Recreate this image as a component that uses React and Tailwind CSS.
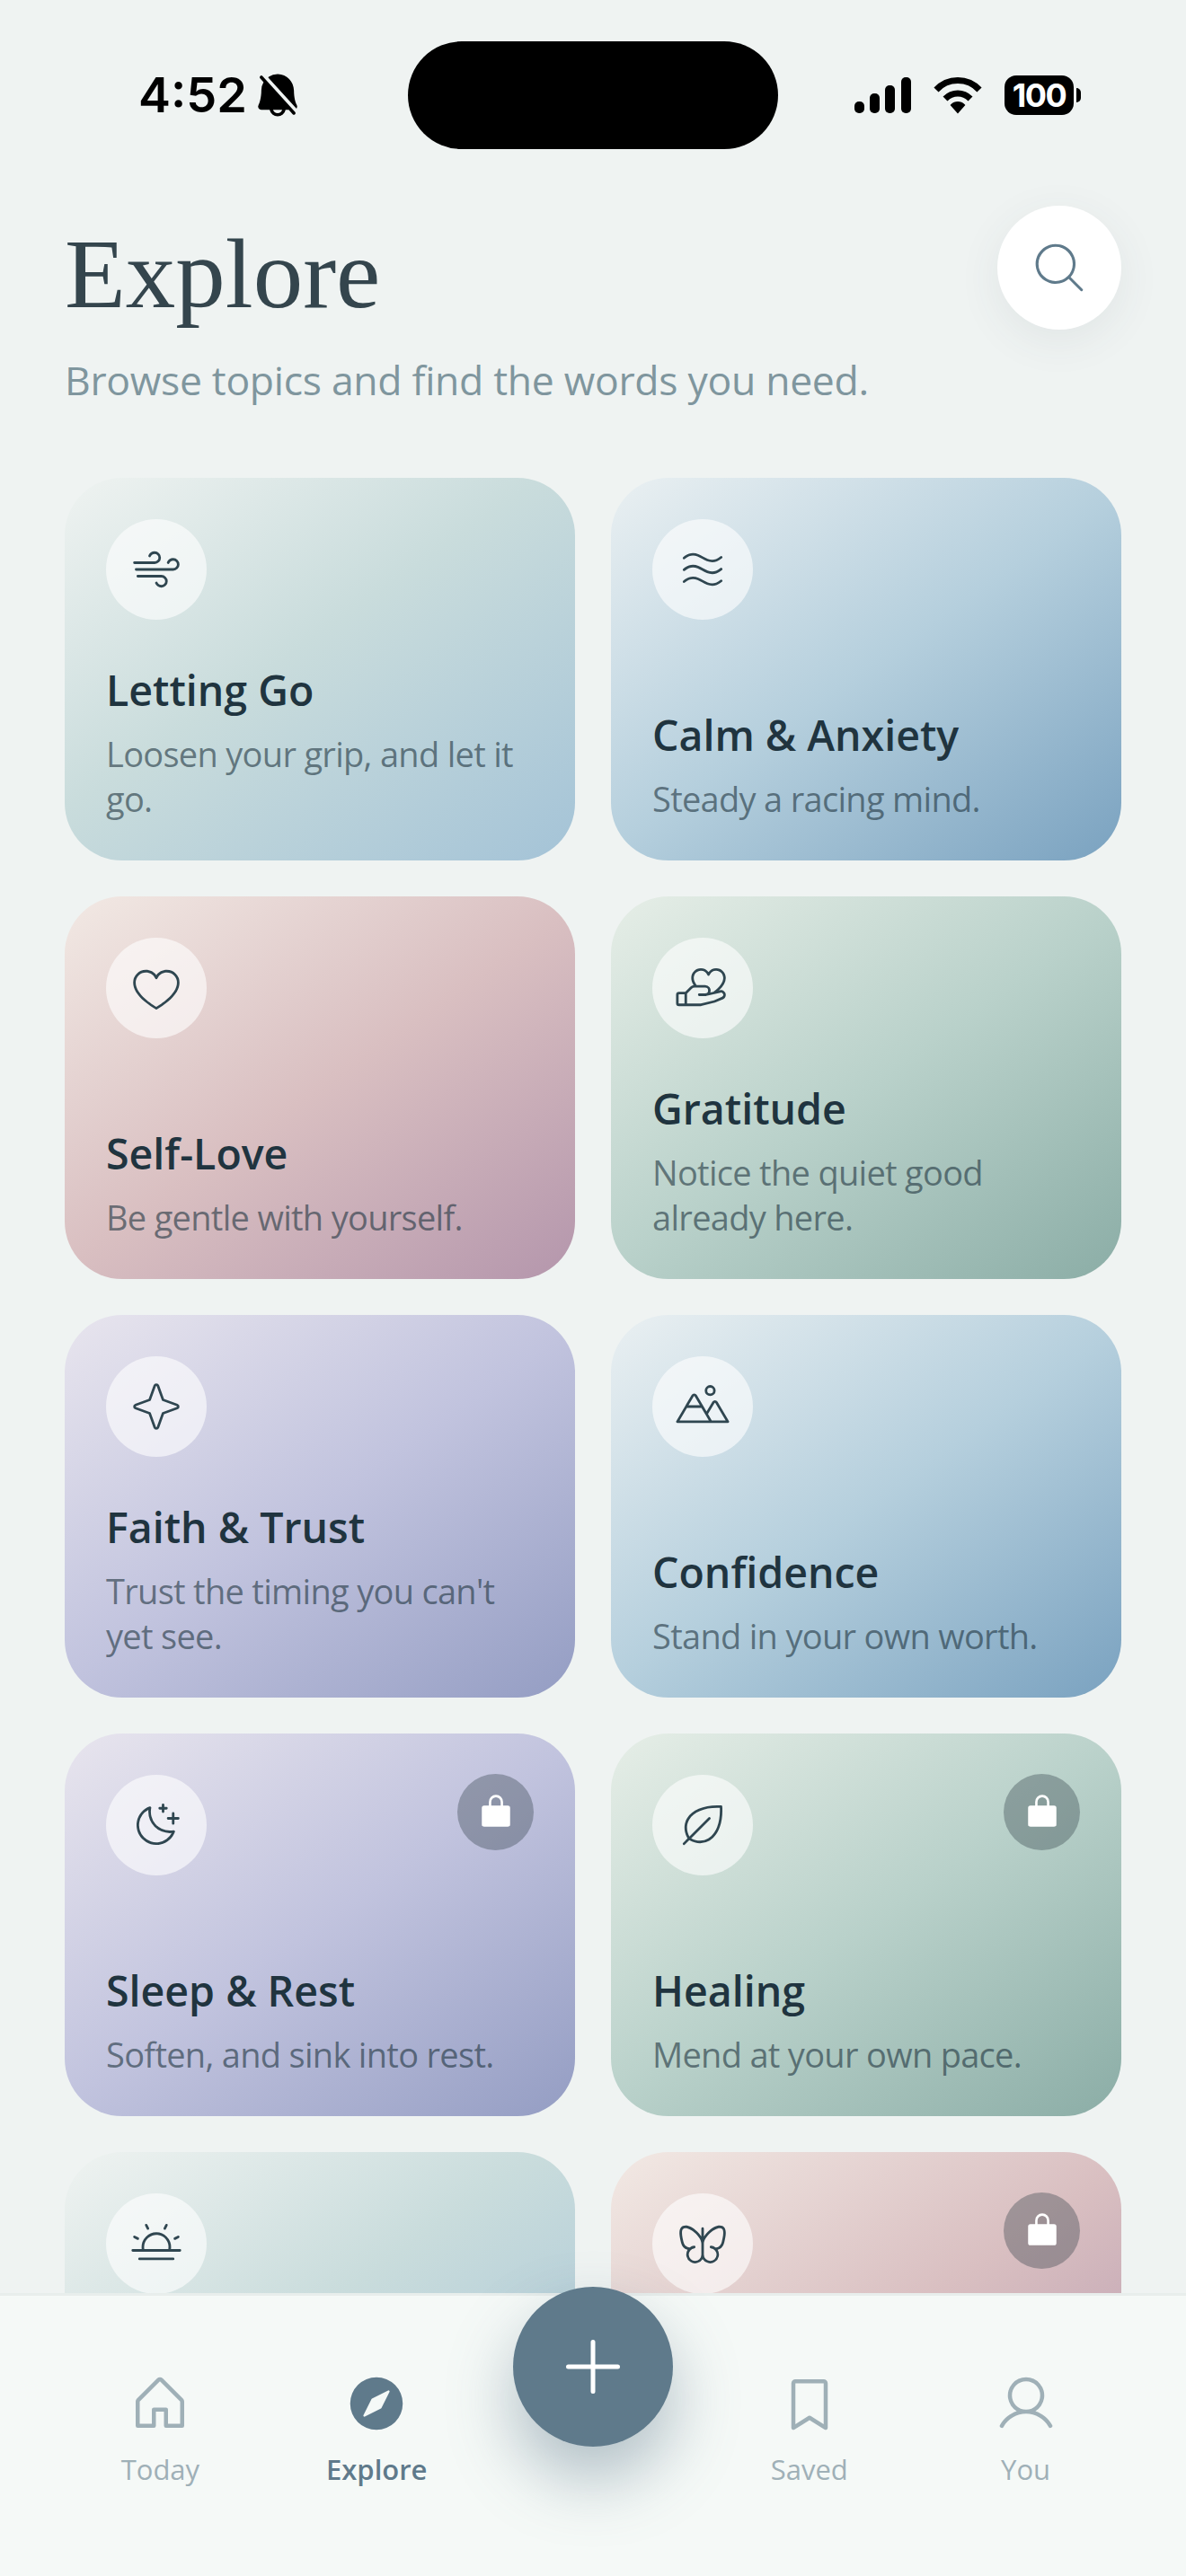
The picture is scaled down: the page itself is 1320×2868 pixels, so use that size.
import React from 'react'
import {
  PiWindLight, PiWavesLight, PiHeartLight, PiHandHeartLight, PiStarFourLight, PiMountainsLight, PiMoonStarsLight, PiLeafLight,
  PiSunHorizonLight, PiButterflyLight, PiLockSimpleFill, PiMagnifyingGlassLight, PiHouse, PiCompassFill,
  PiBookmarkSimple, PiUser, PiPlus, PiBellSlashFill,
} from 'react-icons/pi'

// ── Card gradients
const MIST = 'bg-[linear-gradient(145deg,#eff3f1_0%,#c9dcdc_45%,#a4c3d7_100%)]'
const SKY = 'bg-[linear-gradient(145deg,#eaf0f2_0%,#b5cfdd_50%,#7aa2c0_100%)]'
const ROSE = 'bg-[linear-gradient(145deg,#f2e9e4_0%,#d9bfc1_50%,#b496ac_100%)]'
const SAGE = 'bg-[linear-gradient(145deg,#e6eee7_0%,#b9d1ca_50%,#8bada6_100%)]'
const LAVENDER = 'bg-[linear-gradient(145deg,#e8e5ee_0%,#c1c3de_50%,#949dc3_100%)]'

// last row sits under the tab bar, its text is never in view
const TOPICS = [
  { title: 'Letting Go', text: 'Loosen your grip, and let it go.', Icon: PiWindLight, bg: MIST },
  { title: 'Calm & Anxiety', text: 'Steady a racing mind.', Icon: PiWavesLight, bg: SKY },
  { title: 'Self-Love', text: 'Be gentle with yourself.', Icon: PiHeartLight, bg: ROSE },
  { title: 'Gratitude', text: 'Notice the quiet good already here.', Icon: PiHandHeartLight, bg: SAGE },
  { title: 'Faith & Trust', text: "Trust the timing you can't yet see.", Icon: PiStarFourLight, bg: LAVENDER },
  { title: 'Confidence', text: 'Stand in your own worth.', Icon: PiMountainsLight, bg: SKY },
  { title: 'Sleep & Rest', text: 'Soften, and sink into rest.', Icon: PiMoonStarsLight, bg: LAVENDER, locked: true },
  { title: 'Healing', text: 'Mend at your own pace.', Icon: PiLeafLight, bg: SAGE, locked: true },
  { Icon: PiSunHorizonLight, bg: MIST },
  { Icon: PiButterflyLight, bg: ROSE, locked: true },
]

function StatusBar() {
  return (
    <div className="flex items-center pt-[46px] pl-[154px] pr-[117px] text-black">
      <div className="w-[300px] shrink-0 flex items-center gap-[5px]">
        <span className="font-['Inter',sans-serif] font-semibold text-[54px] leading-none">4:52</span>
        <PiBellSlashFill size={58} />
      </div>
      <div className="w-[412px] h-[120px] rounded-full bg-black shrink-0" />
      <div className="flex-1 flex items-center justify-end">
        <svg width="63" height="40" viewBox="0 0 63 40" fill="currentColor" className="mr-[24px]">
          <rect x="0" y="27" width="11" height="13" rx="5" />
          <rect x="17" y="18" width="11" height="22" rx="5" />
          <rect x="34" y="9" width="11" height="31" rx="5" />
          <rect x="52" y="0" width="11" height="40" rx="5" />
        </svg>
        <svg width="56" height="41" viewBox="0 0 56 41" fill="none" stroke="currentColor" strokeWidth="7" className="mr-[24px]">
          <path d="M4 14 C17 0 39 0 52 14" />
          <path d="M14 24 C22 16 34 16 42 24" />
          <path d="M21 31 L28 39 L35 31 C31 27 25 27 21 31 Z" fill="currentColor" strokeWidth="2" />
        </svg>
        <div className="flex items-center">
          <div className="w-[77px] h-[44px] rounded-[13px] bg-black flex items-center justify-center text-white font-['Inter',sans-serif] font-bold text-[36px] leading-none tracking-[-1.5px]">
            100
          </div>
          <div className="w-[5px] h-[16px] ml-[3px] rounded-r-full bg-black" />
        </div>
      </div>
    </div>
  )
}

function TopicCard({ title, text, Icon, bg, locked }) {
  return (
    <div className={`relative h-[426px] shrink-0 rounded-[64px] p-[46px] pb-[44px] flex flex-col justify-between ${bg}`}>
      <div className="w-[112px] h-[112px] rounded-full bg-white/60 flex items-center justify-center text-[#2f4650]">
        <Icon size={60} />
      </div>
      {locked && (
        <div className="absolute top-[45px] right-[46px] w-[85px] h-[85px] rounded-full bg-[#2f3b45]/35 flex items-center justify-center text-white">
          <PiLockSimpleFill size={42} />
        </div>
      )}
      {title && (
        <div className="font-['Open_Sans',sans-serif]">
          <h3 className="text-[46.5px] leading-[58px] font-semibold text-[#20343f]">{title}</h3>
          <p className="mt-[17px] text-[38px] leading-[50px] text-[#20343f]/60 tracking-[-0.7px]">{text}</p>
        </div>
      )}
    </div>
  )
}

function NavItem({ Icon, label, active }) {
  return (
    <div className={`flex flex-col items-center ${active ? 'text-[#5f7a8b]' : 'text-[#9fb0b7]'}`}>
      <Icon size={72} />
      <span className={`mt-[15px] font-['Open_Sans',sans-serif] text-[31px] leading-[44px] ${active ? 'font-semibold' : 'font-medium'}`}>
        {label}
      </span>
    </div>
  )
}

export default function App() {
  return (
    <div className="w-[1320px] h-[2868px] overflow-hidden flex flex-col bg-[#eff3f2]">
      <StatusBar />

      {/* Header */}
      <div className="flex justify-between items-start px-[72px] pt-[63px]">
        <div>
          <h1 className="font-['Liberation_Serif',serif] text-[111px] leading-[130px] text-[#34454d] mt-[11px]">Explore</h1>
          <p className="font-['Open_Sans',sans-serif] text-[44.5px] leading-[56px] text-[#7f969e] mt-[25px] tracking-[-0.3px]">
            Browse topics and find the words you need.
          </p>
        </div>
        <div className="w-[138px] h-[138px] rounded-full bg-white shadow-[0_12px_48px_rgba(60,80,90,0.08)] flex items-center justify-center text-[#5f7a8b]">
          <PiMagnifyingGlassLight size={66} />
        </div>
      </div>

      {/* Topic grid */}
      <div className="flex-1 min-h-0 overflow-hidden mt-[81px] px-[72px] grid grid-cols-2 gap-[40px] content-start">
        {TOPICS.map((t, i) => <TopicCard key={i} {...t} />)}
      </div>

      {/* Tab bar */}
      <div className="relative h-[315px] shrink-0 bg-[#f5f9f7] border-t-[3px] border-[#e8eeec] px-[58px] pt-[84px] grid grid-cols-5 items-start">
        <NavItem Icon={PiHouse} label="Today" />
        <NavItem Icon={PiCompassFill} label="Explore" active />
        <div />
        <NavItem Icon={PiBookmarkSimple} label="Saved" />
        <NavItem Icon={PiUser} label="You" />
        <div className="absolute top-[-10px] left-[571px] w-[178px] h-[178px] rounded-full bg-[#5f7a8b] flex items-center justify-center text-white shadow-[0_36px_72px_rgba(95,122,139,0.45)]">
          <PiPlus size={80} />
        </div>
      </div>
    </div>
  )
}
